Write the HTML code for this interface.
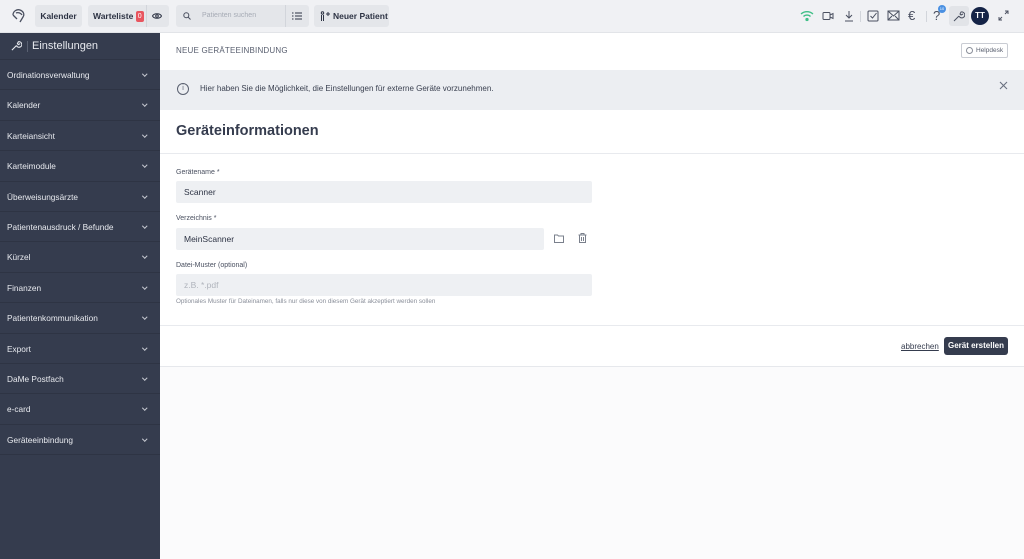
<!DOCTYPE html>
<html><head><meta charset="utf-8"><style>
*{box-sizing:border-box;margin:0;padding:0}
body{width:1024px;height:559px;overflow:hidden;font-family:"Liberation Sans",sans-serif;background:#fbfbfc;position:relative;color:#2d3344}
.top{position:absolute;left:0;top:0;width:1024px;height:33px;background:#f0f1f4;border-bottom:1px solid #e2e4e8}
.btn{position:absolute;top:5px;height:22px;background:#e4e6ea;border-radius:3px;font-size:8.5px;font-weight:bold;color:#2d3344;line-height:22px;white-space:nowrap}
.side{position:absolute;left:0;top:33px;width:160px;height:526px;background:#353c4e;color:#e8eaef}
.side .h{height:26px;line-height:26px;font-size:11px;padding-left:32px;position:relative}
.side .it{height:30.4px;line-height:30px;font-size:8.3px;padding-left:7px;border-top:1px solid #2e3444;position:relative}
.side .it:after{content:"";position:absolute;right:14px;top:12px;width:2.5px;height:2.5px;border-right:1px solid #c9ccd4;border-bottom:1px solid #c9ccd4;transform:rotate(45deg)}
.main{position:absolute;left:160px;top:33px;width:864px;height:334px;background:#fff;border-bottom:1px solid #e6e8ec}
.lbl{position:absolute;left:16px;font-size:7px;color:#4a5060}
.inp{position:absolute;left:16px;height:22px;width:416px;background:#eef0f3;border-radius:2px;font-size:8.5px;line-height:22px;padding-left:8px;color:#2d3344}
.ic{position:absolute}
</style></head><body>
<div class="top">
 <svg class="ic" style="left:10px;top:7px" width="18" height="18" viewBox="0 0 18 18" fill="none" stroke="#4a5060" stroke-width="1.3"><path d="M3 8c0-4 4-6 7-5s5 4 3 7l-3 5M3 8l4 4M6 6c2-1 5 0 6 2"/></svg>
 <div class="btn" style="left:35px;width:47px;text-align:center">Kalender</div>
 <div class="btn" style="left:88px;width:81px;padding-left:5px">Warteliste <span style="display:inline-block;background:#e8555f;color:#fff;border-radius:2px;width:8px;height:11px;line-height:11px;text-align:center;font-size:7px;font-weight:normal;vertical-align:1px">0</span>
  <span style="position:absolute;left:58px;top:0;width:1px;height:22px;background:#d2d5db"></span>
  <svg style="position:absolute;left:64px;top:7px" width="10" height="8" viewBox="0 0 10 8" fill="none" stroke="#2d3344"><path d="M0.5 4C2 1 8 1 9.5 4C8 7 2 7 0.5 4Z"/><circle cx="5" cy="4" r="1.3"/></svg></div>
 <div class="btn" style="left:176px;width:133px;font-weight:normal;color:#a6abb5;font-size:7px;padding-left:26px">Patienten suchen
  <svg style="position:absolute;left:7px;top:7px" width="8" height="8" viewBox="0 0 8 8" fill="none" stroke="#4a5060"><circle cx="3.3" cy="3.3" r="2.5"/><path d="M5 5l2.5 2.5"/></svg>
  <span style="position:absolute;left:109px;top:0;width:1px;height:22px;background:#d2d5db"></span>
  <svg style="position:absolute;left:116px;top:7px" width="10" height="8" viewBox="0 0 10 8" stroke="#2d3344"><path d="M3 1h7M3 4h7M3 7h7M0 1h1.5M0 4h1.5M0 7h1.5"/></svg></div>
 <div class="btn" style="left:314px;width:75px;padding-left:19px"><svg style="position:absolute;left:6px;top:6px" width="10" height="10" viewBox="0 0 10 10" fill="none" stroke="#2d3344"><circle cx="2.5" cy="2" r="1.2"/><path d="M1.5 4v6M3.5 4v6M6 3h4M8 1v4"/></svg>Neuer Patient</div>
 <svg class="ic" style="left:800px;top:10px" width="14" height="12" viewBox="0 0 14 12" fill="none" stroke="#3fbf86" stroke-width="1.3"><path d="M1 4a9 9 0 0 1 12 0M3.5 6.5a5 5 0 0 1 7 0"/><circle cx="7" cy="9.5" r="1" fill="#3fbf86"/></svg>
 <svg class="ic" style="left:822px;top:11px" width="12" height="10" viewBox="0 0 12 10" fill="none" stroke="#4a5060"><rect x="1" y="1.5" width="7" height="7" rx="1"/><path d="M8 4l3-1.5v5L8 6"/></svg>
 <svg class="ic" style="left:844px;top:10px" width="10" height="12" viewBox="0 0 10 12" fill="none" stroke="#4a5060"><path d="M5 1v7M2 5l3 3 3-3M1 11h8"/></svg>
 <span style="position:absolute;left:860px;top:11px;width:1px;height:11px;background:#d2d5db"></span>
 <svg class="ic" style="left:867px;top:10px" width="12" height="12" viewBox="0 0 12 12" fill="none" stroke="#4a5060"><rect x="1" y="1" width="10" height="10" rx="1"/><path d="M3.5 6l2 2 4-5"/></svg>
 <svg class="ic" style="left:887px;top:10px" width="13" height="11" viewBox="0 0 13 11" fill="none" stroke="#4a5060"><rect x="1" y="1" width="11" height="9"/><path d="M1 1l5.5 5 5.5-5M1 10l4-4M12 10l-4-4"/></svg>
 <div style="position:absolute;left:908px;top:8px;font-size:13px;color:#4a5060">€</div>
 <span style="position:absolute;left:926px;top:11px;width:1px;height:11px;background:#d2d5db"></span>
 <div style="position:absolute;left:933px;top:8px;font-size:13px;color:#4a5060">?</div>
 <div style="position:absolute;left:938px;top:5px;width:8px;height:8px;border-radius:50%;background:#4a90e2;font-size:4px;color:#fff;text-align:center;line-height:8px">10</div>
 <div style="position:absolute;left:949px;top:6px;width:20px;height:20px;background:#e2e4e8;border-radius:3px"></div>
 <svg class="ic" style="left:953px;top:10px" width="12" height="12" viewBox="0 0 12 12" fill="none" stroke="#4a5060"><path d="M1 11l5-5M6 6a3 3 0 1 0 2-4l-1 2 1 1 2-1"/></svg>
 <div style="position:absolute;left:971px;top:7px;width:18px;height:18px;border-radius:50%;background:#152447;color:#fff;font-size:8px;font-weight:bold;text-align:center;line-height:18px">TT</div>
 <svg class="ic" style="left:998px;top:10px" width="11" height="11" viewBox="0 0 11 11" fill="none" stroke="#4a5060"><path d="M1 10l3-3M10 1L7 4M1 7v3h3M7 1h3v3"/></svg>
</div>
<div class="side">
 <div class="h"><svg style="position:absolute;left:11px;top:7px" width="11" height="11" viewBox="0 0 12 12" fill="none" stroke="#e8eaef" stroke-width="1.2"><path d="M1 11l5-5M6 6a3 3 0 1 0 2-4l-1 2 1 1 2-1"/></svg><span style="position:absolute;left:27px;top:8px;width:1px;height:11px;background:#5a6172"></span>Einstellungen</div>
 <div class="it">Ordinationsverwaltung</div><div class="it">Kalender</div><div class="it">Karteiansicht</div><div class="it">Karteimodule</div><div class="it">Überweisungsärzte</div><div class="it">Patientenausdruck / Befunde</div><div class="it">Kürzel</div><div class="it">Finanzen</div><div class="it">Patientenkommunikation</div><div class="it">Export</div><div class="it">DaMe Postfach</div><div class="it">e-card</div><div class="it">Geräteeinbindung</div>
 <div style="border-top:1px solid #2e3444"></div>
</div>
<div class="main">
 <div style="position:absolute;left:16px;top:13px;font-size:8px;color:#5a6070;letter-spacing:.2px">NEUE GERÄTEEINBINDUNG</div>
 <div style="position:absolute;left:801px;top:10px;width:47px;height:15px;border:1px solid #c9ccd3;border-radius:2px;font-size:6.5px;color:#5a6070;line-height:13px;padding-left:14px">Helpdesk<span style="position:absolute;left:4px;top:3px;width:7px;height:7px;border:1px solid #8a8f9a;border-radius:50%"></span></div>
 <div style="position:absolute;left:0;top:37px;width:864px;height:40px;background:#eceef2"></div>
 <div style="position:absolute;left:17px;top:50px;width:12px;height:12px;border:1px solid #5a6070;border-radius:50%;font-size:7px;text-align:center;line-height:10px;color:#5a6070">i</div>
 <div style="position:absolute;left:40px;top:51px;font-size:8px;color:#3a4050">Hier haben Sie die Möglichkeit, die Einstellungen für externe Geräte vorzunehmen.</div>
 <svg class="ic" style="left:839px;top:48px" width="9" height="9" viewBox="0 0 9 9" stroke="#6a7080" stroke-width="1.1"><path d="M1 1l7 7M8 1L1 8"/></svg>
 <div style="position:absolute;left:16px;top:90px;font-size:14.5px;font-weight:bold;color:#353c4e">Geräteinformationen</div>
 <div style="position:absolute;left:0;top:120px;width:864px;height:1px;background:#e8eaee"></div>
 <div class="lbl" style="top:136px">Gerätename *</div>
 <div class="inp" style="top:148px">Scanner</div>
 <div class="lbl" style="top:182px">Verzeichnis *</div>
 <div class="inp" style="top:195px;width:368px">MeinScanner</div>
 <svg class="ic" style="left:394px;top:201px" width="10" height="9" viewBox="0 0 10 9" fill="none" stroke="#7a808c"><path d="M0.5 1h3l1 1h5v6.5h-9z"/></svg>
 <svg class="ic" style="left:418px;top:200px" width="9" height="10" viewBox="0 0 9 10" fill="none" stroke="#7a808c"><path d="M0.5 2h8M3 2V0.5h3V2M1.5 2v7.5h6V2M3.5 4v4M5.5 4v4"/></svg>
 <div class="lbl" style="top:229px">Datei-Muster (optional)</div>
 <div class="inp" style="top:241px;color:#b0b4bc">z.B. *.pdf</div>
 <div class="lbl" style="top:265px;font-size:6.3px;color:#8a8f9a">Optionales Muster für Dateinamen, falls nur diese von diesem Gerät akzeptiert werden sollen</div>
 <div style="position:absolute;left:0;top:292px;width:864px;height:1px;background:#e8eaee"></div>
 <div style="position:absolute;left:741px;top:309px;font-size:8px;color:#353c4e;text-decoration:underline">abbrechen</div>
 <div style="position:absolute;left:784px;top:304px;width:64px;height:18px;background:#353c4e;border-radius:3px;color:#fff;font-size:8px;font-weight:bold;text-align:center;line-height:18px;white-space:nowrap">Gerät erstellen</div>
</div>
</body></html>
